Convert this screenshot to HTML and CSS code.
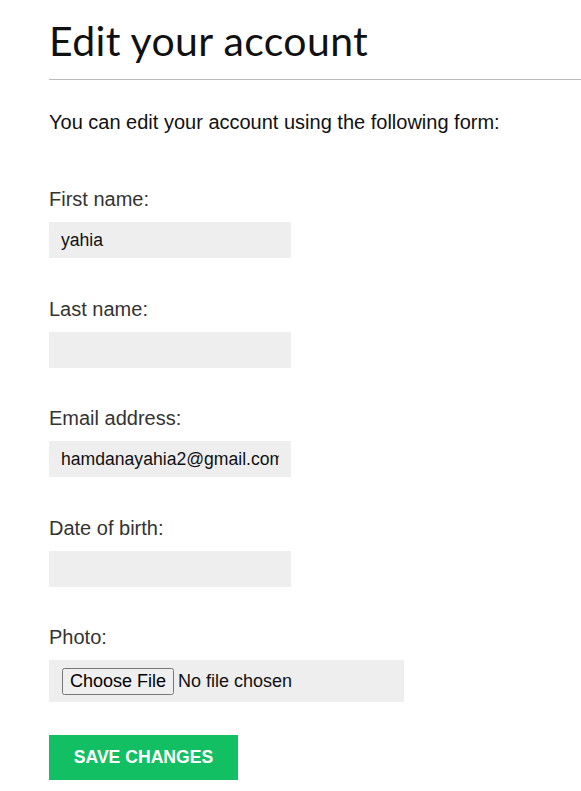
FILE: index.html
```html
<!DOCTYPE html>
<html>
<head>
<meta charset="utf-8">
<link rel="stylesheet" href="styles.css">
</head>
<body>
<div class="page">
  <h1 class="title">Edit your account</h1>
  <p class="intro">You can edit your account using the following form:</p>
  <form class="form">
    <div class="field">
      <label class="label">First name:</label>
      <input class="input" type="text" value="yahia">
    </div>
    <div class="field">
      <label class="label">Last name:</label>
      <input class="input" type="text" value="">
    </div>
    <div class="field">
      <label class="label">Email address:</label>
      <input class="input" type="text" value="hamdanayahia2@gmail.com">
    </div>
    <div class="field">
      <label class="label">Date of birth:</label>
      <input class="input" type="text" value="">
    </div>
    <div class="field">
      <label class="label">Photo:</label>
      <input class="file" type="file">
    </div>
    <button class="save" type="button">Save changes</button>
  </form>
</div>
</body>
</html>
```
FILE: styles.css
```css
html, body { margin: 0; padding: 0; background: #fff; }
body { font-family: "Liberation Sans", Arial, sans-serif; color: #333; }
.page { padding: 0 0 0 49px; }
.title {
  font-family: Lato, "Noto Sans", sans-serif;
  font-weight: 400;
  font-size: 41px;
  line-height: 48px;
  letter-spacing: 0.35px;
  color: #111;
  margin: 17px 0 0 0;
  padding-bottom: 14px;
  border-bottom: 1px solid #bbb;
}
.intro {
  font-size: 20px;
  line-height: 23px;
  color: #111;
  margin: 31px 0 0 0;
}
.form { margin-top: 54px; }
.field { display: flex; flex-direction: column; align-items: flex-start; margin-bottom: 39.5px; }
.label { font-size: 20px; line-height: 23px; color: #333; margin-bottom: 11px; }
.input {
  box-sizing: border-box;
  width: 242px;
  height: 36px;
  border: none;
  background: #eee;
  padding: 0 12px;
  font-family: "Liberation Sans", Arial, sans-serif;
  font-size: 17.6px;
  color: #111;
  outline: none;
}
.file {
  box-sizing: border-box;
  width: 355px;
  height: 42px;
  background: #eee;
  padding: 8px 13px 0 13px;
  font-family: "Liberation Sans", Arial, sans-serif;
  font-size: 18px;
  color: #111;
}
.save {
  margin-top: -7px;
  width: 189px;
  height: 45px;
  border: none;
  background: #13bf63;
  color: #fff;
  font-family: "Liberation Sans", Arial, sans-serif;
  font-weight: 700;
  font-size: 17.6px;
  text-transform: uppercase;
}
```
